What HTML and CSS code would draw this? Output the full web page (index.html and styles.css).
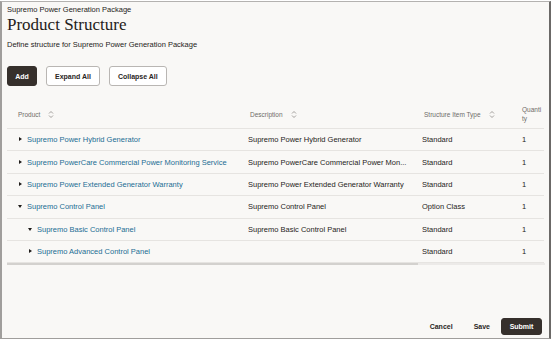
FILE: index.html
```html
<!DOCTYPE html>
<html lang="en">
<head>
  <meta charset="UTF-8">
  <title>Product Structure</title>
  <link rel="stylesheet" href="styles.css">
</head>
<body>
  <div class="frame">
    <div class="crumb">Supremo Power Generation Package</div>
    <h1>Product Structure</h1>
    <div class="subtitle">Define structure for Supremo Power Generation Package</div>

    <div class="toolbar">
      <button class="btn primary">Add</button>
      <button class="btn">Expand All</button>
      <button class="btn">Collapse All</button>
    </div>

    <div class="grid">
      <div class="row head">
        <div class="cell">Product <svg class="sort" viewBox="0 0 6 9"><path d="M1 3.5 L3 1.5 L5 3.5 M1 5.5 L3 7.5 L5 5.5"/></svg></div>
        <div class="cell">Description <svg class="sort" viewBox="0 0 6 9"><path d="M1 3.5 L3 1.5 L5 3.5 M1 5.5 L3 7.5 L5 5.5"/></svg></div>
        <div class="cell">Structure Item Type <svg class="sort" viewBox="0 0 6 9"><path d="M1 3.5 L3 1.5 L5 3.5 M1 5.5 L3 7.5 L5 5.5"/></svg></div>
        <div class="cell qty">Quanti<br>ty</div>
      </div>
      <div class="row">
        <div class="cell prod"><span class="caret closed"></span><a href="#">Supremo Power Hybrid Generator</a></div>
        <div class="cell">Supremo Power Hybrid Generator</div>
        <div class="cell">Standard</div>
        <div class="cell qty">1</div>
      </div>
      <div class="row">
        <div class="cell prod"><span class="caret closed"></span><a href="#">Supremo PowerCare Commercial Power Monitoring Service</a></div>
        <div class="cell" title="Supremo PowerCare Commercial Power Monitoring Service">Supremo PowerCare Commercial Power Mon...</div>
        <div class="cell">Standard</div>
        <div class="cell qty">1</div>
      </div>
      <div class="row">
        <div class="cell prod"><span class="caret closed"></span><a href="#">Supremo Power Extended Generator Warranty</a></div>
        <div class="cell">Supremo Power Extended Generator Warranty</div>
        <div class="cell">Standard</div>
        <div class="cell qty">1</div>
      </div>
      <div class="row">
        <div class="cell prod"><span class="caret open"></span><a href="#">Supremo Control Panel</a></div>
        <div class="cell">Supremo Control Panel</div>
        <div class="cell">Option Class</div>
        <div class="cell qty">1</div>
      </div>
      <div class="row">
        <div class="cell prod level2"><span class="caret open"></span><a href="#">Supremo Basic Control Panel</a></div>
        <div class="cell">Supremo Basic Control Panel</div>
        <div class="cell">Standard</div>
        <div class="cell qty">1</div>
      </div>
      <div class="row">
        <div class="cell prod level2"><span class="caret closed"></span><a href="#">Supremo Advanced Control Panel</a></div>
        <div class="cell"></div>
        <div class="cell">Standard</div>
        <div class="cell qty">1</div>
      </div>
      <div class="scrollbar"><div class="thumb"></div></div>
    </div>

    <div class="footer">
      <button class="btn link">Cancel</button>
      <button class="btn link save">Save</button>
      <button class="btn primary submit">Submit</button>
    </div>
  </div>
</body>
</html>
```

FILE: styles.css
```css
html, body {
  margin: 0;
  padding: 0;
  background: #fff;
  font-family: "Liberation Sans", Arial, sans-serif;
  color: #1f1c1a;
}
.frame {
  box-sizing: border-box;
  width: 551px;
  height: 338px;
  margin-top: 1px;
  background: #f9f8f6;
  border-top: 1px solid #b4b2b0;
  border-left: 2px solid #a09e9c;
  border-right: 2px solid #6b6967;
  border-bottom: 1px solid #a09e9c;
  padding: 2px 5px 0 5px;
  display: flex;
  flex-direction: column;
}
.crumb {
  font-size: 7.5px;
  line-height: 10px;
  margin-top: 1px;
}
h1 {
  font-family: "Liberation Serif", "Times New Roman", serif;
  font-weight: normal;
  font-size: 17px;
  line-height: 20px;
  margin: 0;
}
.subtitle {
  font-size: 7.5px;
  line-height: 10px;
  margin-top: 5px;
}
.toolbar {
  display: flex;
  gap: 9px;
  margin-top: 16px;
}
.btn {
  font-family: inherit;
  font-size: 7px;
  font-weight: bold;
  color: #2a2624;
  height: 20px;
  padding: 0 8px;
  border: 1px solid #b9b6b3;
  border-radius: 3px;
  background: #fff;
  cursor: pointer;
}
.btn.primary {
  background: #36302c;
  border-color: #36302c;
  color: #fff;
  width: 30px;
  padding: 0;
}
.grid {
  margin-top: 15px;
  font-size: 7.5px;
}
.row {
  display: grid;
  grid-template-columns: 237px 174px 96px 31px;
  height: 22.4px;
  border-bottom: 1px solid #e6e4e1;
  box-sizing: border-box;
}
.row.head {
  height: 28px;
  font-size: 6.5px;
}
.cell {
  display: flex;
  align-items: center;
  padding-left: 4px;
  white-space: nowrap;
  overflow: hidden;
  color: #1f1c1a;
}
.head .cell {
  padding-left: 6px;
  color: #6f6c69;
}
.head .cell:first-child {
  padding-left: 11px;
}
.head .qty {
  display: block;
  line-height: 9px;
  padding-left: 9px;
  padding-top: 4px;
}
.sort {
  width: 6px;
  height: 9px;
  margin-left: 8px;
  fill: none;
  stroke: #8b8885;
  stroke-width: 0.8;
}
.cell.qty {
  padding-left: 8px;
}
.prod {
  padding-left: 11px;
}
.prod.level2 {
  padding-left: 21px;
}
.prod a {
  color: #226d94;
  text-decoration: none;
}
.caret {
  width: 5px;
  height: 5px;
  margin-right: 4px;
  position: relative;
}
.caret.closed::before {
  content: "";
  position: absolute;
  left: 1px;
  top: 0;
  border-left: 3px solid #1f1c1a;
  border-top: 2.5px solid transparent;
  border-bottom: 2.5px solid transparent;
}
.caret.open::before {
  content: "";
  position: absolute;
  left: 0;
  top: 1px;
  border-top: 3px solid #1f1c1a;
  border-left: 2.5px solid transparent;
  border-right: 2.5px solid transparent;
}
.scrollbar {
  height: 2px;
  width: 538px;
  background: #eceae8;
}
.thumb {
  height: 2px;
  width: 411px;
  background: #d3d1ce;
}
.footer {
  margin-top: auto;
  margin-bottom: 3px;
  display: flex;
  justify-content: flex-end;
  align-items: center;
  gap: 0;
  padding-right: 2px;
}
.btn.link {
  border: none;
  background: none;
  padding: 0 9px;
  height: 17px;
}
.btn.link.save {
  padding: 0 11px 0 12px;
}
.btn.submit {
  height: 17px;
  width: 41px;
  padding: 0;
  margin-left: 0;
}
```
